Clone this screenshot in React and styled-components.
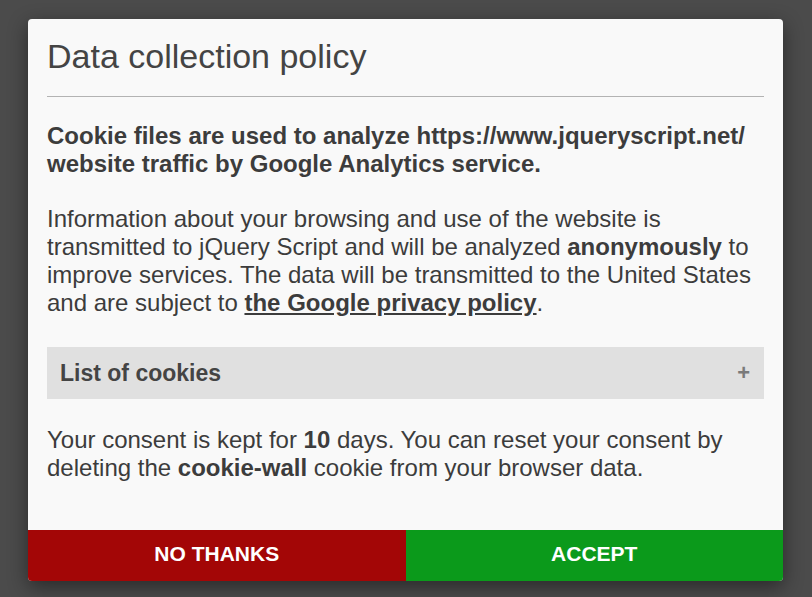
import React from 'react'
import styled, { createGlobalStyle } from 'styled-components'

//-- cookie wall dialog: title, policy text, collapsible cookie list, two buttons

const Global = createGlobalStyle`
  html, body {
    margin: 0;
    padding: 0;
    background: #4b4b4b;
    font-family: "Liberation Sans", Arial, sans-serif;
  }
`;

const Overlay = styled.div`
  display: flex;
  justify-content: flex-start;
  padding: 19px 0 0 28px;
  min-height: 597px;
  box-sizing: border-box;
`;

const Card = styled.div`
  width: 755px;
  height: 562px;
  display: flex;
  flex-direction: column;
  background: #f9f9f9;
  border-radius: 4px;
  overflow: hidden;
  box-shadow: 0 6px 20px rgba(0,0,0,0.45);
`;

const Body = styled.div`
  flex: 1;
  padding: 18px 19px 0 19px;
  color: #3c3c3c;
`;

const Title = styled.h2`
  margin: 0;
  padding-bottom: 21px;
  font-size: 34px;
  font-weight: 400;
  line-height: 38px;
  color: #444;
  border-bottom: 1px solid #b3b3b3;
`;

const Text = styled.p`
  margin: ${p => p.top || 0}px 0 0 0;
  font-size: 24px;
  line-height: 28px;
  font-weight: ${p => (p.bold ? 700 : 400)};
  color: #3c3c3c;

  a {
    color: #3c3c3c;
    font-weight: 700;
    text-decoration: underline;
  }
`;

const Toggle = styled.div`
  margin-top: 30px;
  height: 52px;
  padding: 0 13px;
  display: flex;
  align-items: center;
  justify-content: space-between;
  background: #e0e0e0;
  font-size: 23px;
  font-weight: 700;
  color: #444;
`;

const Plus = styled.span`
  font-size: 22px;
  font-weight: 700;
  color: #7a7a7a;
  margin-right: 1px;
`;

const Footer = styled.div`
  display: flex;
  height: 51px;
`;

const Button = styled.button`
  flex: 1;
  border: 0;
  margin: 0;
  padding: 0 0 3px 0;
  background: ${p => p.color};
  color: #fff;
  font-family: "Liberation Sans", Arial, sans-serif;
  font-size: 21px;
  font-weight: 700;
  text-transform: uppercase;
  cursor: pointer;
`;

const App = () => (
  <>
    <Global />
    <Overlay>
      <Card>
        <Body>
          <Title>Data collection policy</Title>
          <Text bold top={25}>
            Cookie files are used to analyze https://www.jqueryscript.net/ website traffic by Google Analytics service.
          </Text>
          <Text top={27}>
            Information about your browsing and use of the website is transmitted to jQuery Script and will be analyzed <b>anonymously</b> to improve services. The data will be transmitted to the United States and are subject to <a href="#">the Google privacy policy</a>.
          </Text>
          <Toggle>
            List of cookies
            <Plus>+</Plus>
          </Toggle>
          <Text top={27}>
            Your consent is kept for <b>10</b> days. You can reset your consent by deleting the <b>cookie-wall</b> cookie from your browser data.
          </Text>
        </Body>
        <Footer>
          <Button color="#a30606">No thanks</Button>
          <Button color="#0b9a1b">Accept</Button>
        </Footer>
      </Card>
    </Overlay>
  </>
)

export default App
